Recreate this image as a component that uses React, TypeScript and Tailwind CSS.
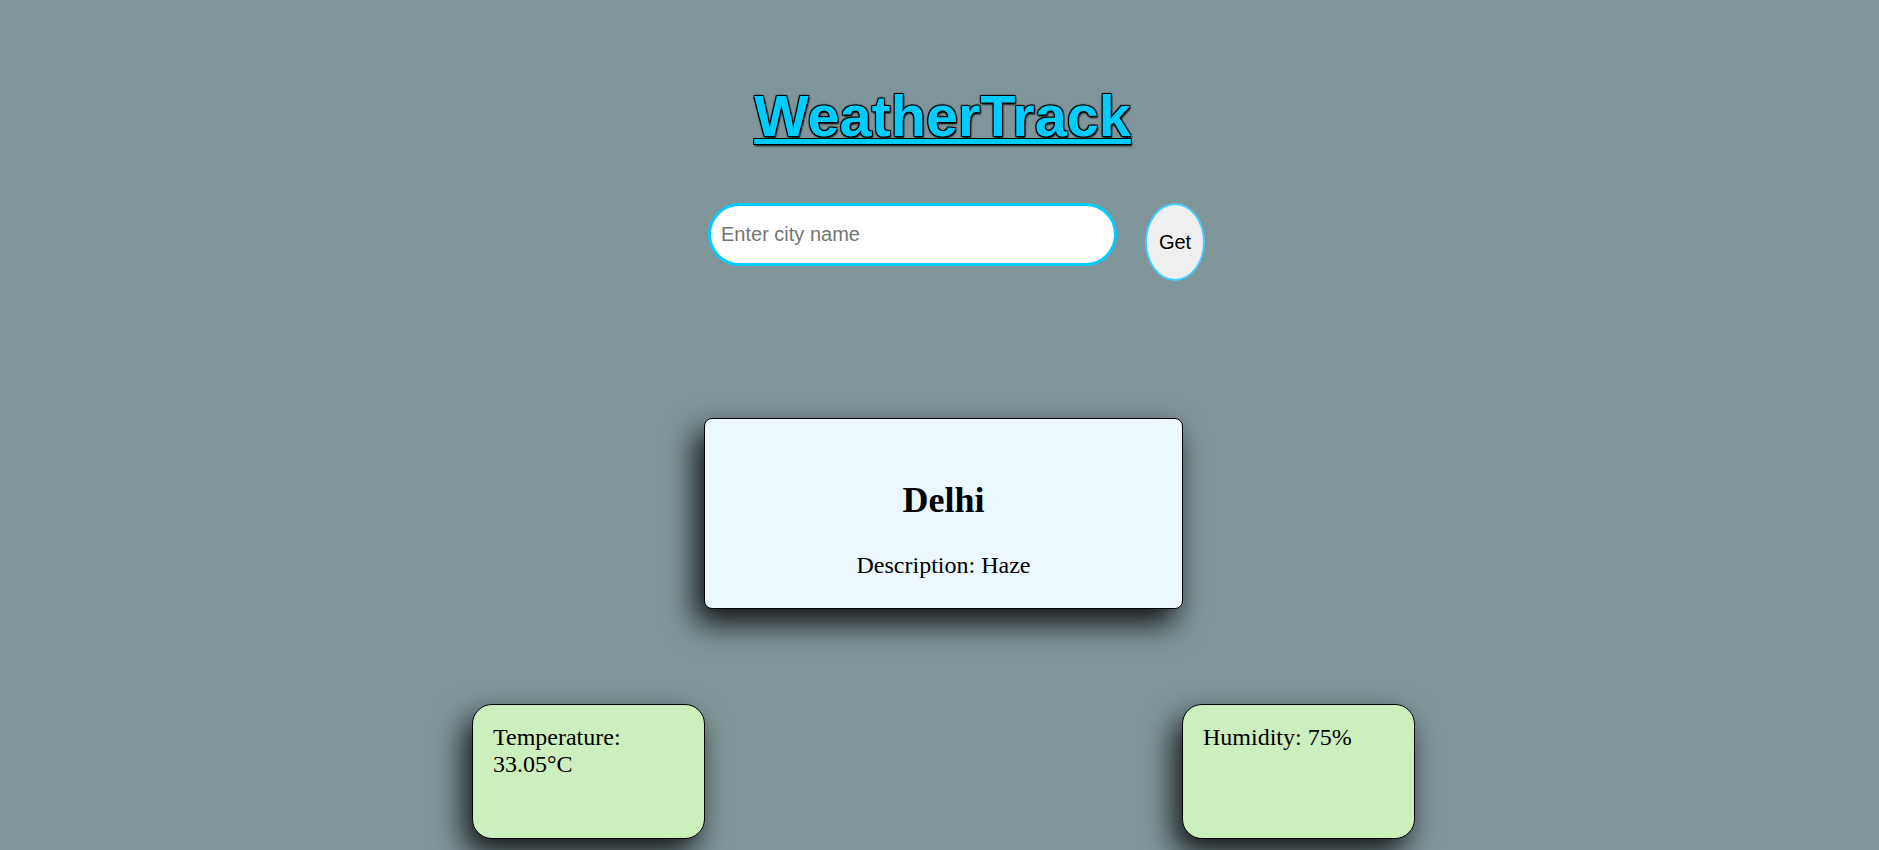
import React from "react";

export default function App() {
  return (
    <div className="min-h-screen w-full bg-[#80959a] overflow-hidden" style={{ fontFamily: '"Liberation Serif", "Times New Roman", serif' }}>
      <div className="flex justify-center pt-[83px] pl-[6px]">
        <h1
          className="m-0 text-[57.6px] leading-[66px] font-bold text-[#00ccff] underline [text-shadow:1px_1px_1px_#000,-1px_-1px_1px_#000,1px_-1px_1px_#000,-1px_1px_1px_#000,1px_2px_2px_#000]"
          style={{ fontFamily: '"Liberation Sans", Arial, sans-serif' }}
        >
          WeatherTrack
        </h1>
      </div>

      <div className="flex justify-center items-start gap-[28px] mt-[54px] pl-[34px]">
        <input
          type="text"
          placeholder="Enter city name"
          className="w-[409px] h-[63px] rounded-full border-[3px] border-[#00ccff] bg-white pl-[10px] text-[20px] text-black placeholder:text-[#757575] outline-none"
          style={{ fontFamily: '"Liberation Sans", Arial, sans-serif' }}
        />
        <button
          className="w-[60px] h-[78px] rounded-[50%] border-2 border-[#3fd0ff] bg-[#efefef] text-[20px] text-black"
          style={{ fontFamily: '"Liberation Sans", Arial, sans-serif' }}
        >
          Get
        </button>
      </div>

      <div className="flex justify-center mt-[137px] pl-[8px]">
        <div className="w-[479px] h-[191px] rounded-[8px] border border-black bg-[#ebf8ff] shadow-[-8px_14px_30px_rgba(0,0,0,0.9)] pt-[61px] text-center text-black">
          <h2 className="m-0 text-[36px] leading-[41px] font-bold">Delhi</h2>
          <p className="m-0 mt-[30px] text-[24px] leading-[28px]">Description: Haze</p>
        </div>
      </div>

      <div className="flex justify-center mt-[95px] pl-[8px]">
        <div className="flex justify-between w-[943px]">
          <div className="w-[233px] h-[135px] rounded-[20px] border border-black bg-[#cdeebd] shadow-[-8px_14px_30px_rgba(0,0,0,0.85)] px-[20px] pt-[19px] text-[24px] leading-[27px] text-black">
            Temperature: 33.05°C
          </div>
          <div className="w-[233px] h-[135px] rounded-[20px] border border-black bg-[#cdeebd] shadow-[-8px_14px_30px_rgba(0,0,0,0.85)] px-[20px] pt-[19px] text-[24px] leading-[27px] text-black">
            Humidity: 75%
          </div>
        </div>
      </div>
    </div>
  );
}
